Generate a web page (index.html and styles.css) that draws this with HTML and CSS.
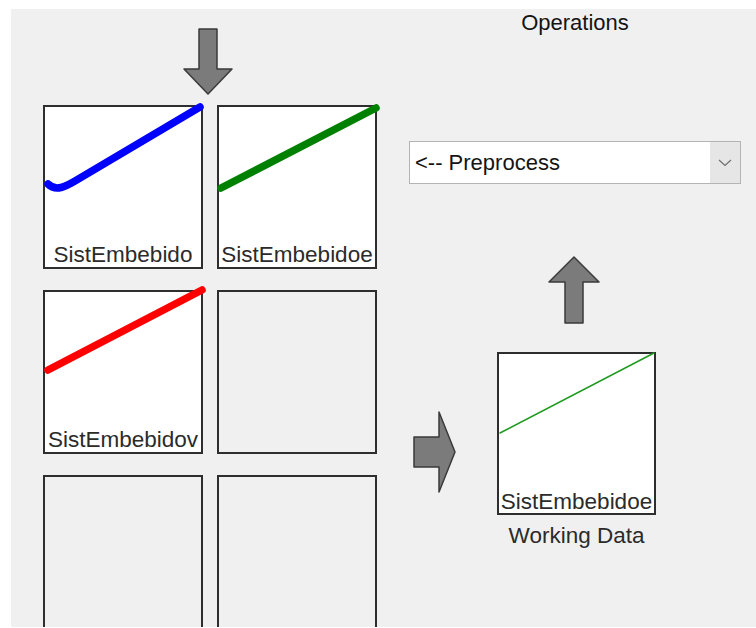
FILE: index.html
```html
<!DOCTYPE html>
<html lang="en">
<head>
    <meta charset="UTF-8">
    <meta name="viewport" content="width=device-width, initial-scale=1.0">
    <title>Data Browser</title>
    <link rel="stylesheet" href="styles.css">
</head>
<body>
    <div class="panel">
        <div class="data-side">
            <svg class="arrow-down" width="51" height="68" viewBox="0 0 51 68">
                <path d="M16 1 H34 V41 H49 L25 66 L1 41 H16 Z" />
            </svg>
            <div class="tiles">
                <div class="tile filled">
                    <svg class="plot" width="156" height="137" viewBox="0 0 156 137">
                        <path class="trace blue" d="M3 77 C6 80 10 82 16 80.5 C20 79.5 24 77.5 30 74 L155 0" />
                    </svg>
                    <div class="tile-label">SistEmbebido</div>
                </div>
                <div class="tile filled">
                    <svg class="plot" width="156" height="137" viewBox="0 0 156 137">
                        <line class="trace green" x1="2" y1="81" x2="157" y2="1" />
                    </svg>
                    <div class="tile-label">SistEmbebidoe</div>
                </div>
                <div class="tile filled">
                    <svg class="plot" width="156" height="137" viewBox="0 0 156 137">
                        <line class="trace red" x1="3" y1="78" x2="157" y2="-2" />
                    </svg>
                    <div class="tile-label">SistEmbebidov</div>
                </div>
                <div class="tile"></div>
                <div class="tile"></div>
                <div class="tile"></div>
            </div>
        </div>

        <div class="ops-side">
            <div class="ops-title">Operations</div>
            <div class="dropdown">
                <span class="dropdown-text">&lt;-- Preprocess</span>
                <span class="dropdown-btn">
                    <svg width="14" height="8" viewBox="0 0 14 8">
                        <polyline points="1,1 7,6.5 13,1" />
                    </svg>
                </span>
            </div>
            <svg class="arrow-up" width="52" height="68" viewBox="0 0 52 68">
                <path d="M26 1 L51 26 H35 V67 H17 V26 H1 Z" />
            </svg>
            <div class="work-row">
                <svg class="arrow-right" width="43" height="82" viewBox="0 0 43 82">
                    <path d="M1 26 H26 V1 L42 41 L26 81 V56 H1 Z" />
                </svg>
                <div class="work-box">
                    <div class="tile filled">
                        <svg class="plot" width="155" height="137" viewBox="0 0 155 137">
                            <line class="trace thin" x1="1" y1="79" x2="155" y2="-1" />
                        </svg>
                        <div class="tile-label">SistEmbebidoe</div>
                    </div>
                    <div class="work-label">Working Data</div>
                </div>
            </div>
        </div>
    </div>
</body>
</html>
```

FILE: styles.css
```css
body {
    margin: 0;
    background-color: #fff;
    font-family: "Liberation Sans", Arial, sans-serif;
}
.panel {
    margin: 9px 0 0 11px;
    height: 618px;
    background-color: #f0f0f0;
    overflow: hidden;
    display: flex;
}
.data-side {
    width: 334px;
    padding-left: 32px;
}
.arrow-down {
    display: block;
    margin: 19px 0 9px 140px;
}
.arrow-down path, .arrow-up path, .arrow-right path {
    fill: #7b7b7b;
    stroke: #3a3a3a;
    stroke-width: 1.5;
    stroke-linejoin: round;
}
.tiles {
    display: grid;
    grid-template-columns: 160px 160px;
    grid-auto-rows: 164px;
    column-gap: 14px;
    row-gap: 21px;
}
.tile {
    box-sizing: border-box;
    width: 160px;
    height: 164px;
    border: 2px solid #2e2e2e;
    display: flex;
    flex-direction: column;
}
.tile.filled {
    background-color: #fff;
}
.plot {
    display: block;
    overflow: visible;
}
.trace {
    fill: none;
    stroke-width: 7.5;
    stroke-linecap: round;
    stroke-linejoin: round;
}
.trace.blue {
    stroke: #0000ff;
}
.trace.green {
    stroke: #008000;
}
.trace.red {
    stroke: #ff0000;
}
.trace.thin {
    stroke: #1e9a1e;
    stroke-width: 1.5;
}
.tile-label {
    margin-top: auto;
    margin-bottom: 1px;
    font-size: 22.5px;
    line-height: 22px;
    color: #2b2b2b;
    text-align: center;
    white-space: nowrap;
}
.ops-side {
    width: 332px;
    margin-left: 32px;
    display: flex;
    flex-direction: column;
    align-items: center;
}
.ops-title {
    font-size: 22px;
    line-height: 28px;
    color: #141414;
}
.dropdown {
    box-sizing: border-box;
    margin-top: 104px;
    width: 332px;
    height: 43px;
    border: 1px solid #b4b4b4;
    background-color: #fff;
    display: flex;
    align-items: stretch;
}
.dropdown-text {
    flex: 1;
    padding-left: 5px;
    font-size: 22px;
    line-height: 41px;
    color: #141414;
}
.dropdown-btn {
    width: 30px;
    background-color: #e6e6e6;
    display: flex;
    align-items: center;
    justify-content: center;
}
.dropdown-btn polyline {
    fill: none;
    stroke: #707070;
    stroke-width: 1.2;
}
.arrow-up {
    display: block;
    margin-top: 72px;
    margin-left: -2px;
}
.work-row {
    align-self: stretch;
    display: flex;
    align-items: flex-start;
}
.arrow-right {
    display: block;
    margin: 87px 0 0 4px;
}
.work-box {
    margin: 28px 0 0 41px;
    display: flex;
    flex-direction: column;
    align-items: center;
}
.work-box .tile {
    width: 159px;
    height: 163px;
}
.work-label {
    margin-top: 7px;
    font-size: 22.5px;
    line-height: 28px;
    color: #2b2b2b;
}
```
